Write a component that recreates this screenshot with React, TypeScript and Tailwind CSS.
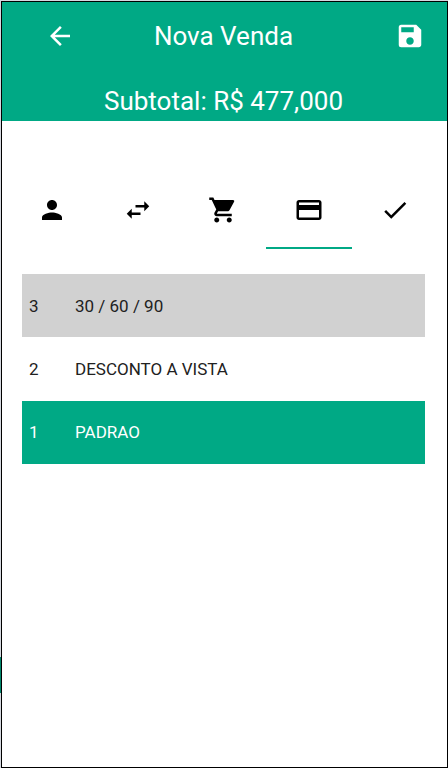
import { useState } from 'react';
import {
  MdArrowBack,
  MdCheck,
  MdCreditCard,
  MdPerson,
  MdSave,
  MdShoppingCart,
  MdSwapHoriz,
} from 'react-icons/md';

interface PaymentTerm {
  id: number;
  name: string;
}

const terms: PaymentTerm[] = [
  { id: 3, name: '30 / 60 / 90' },
  { id: 2, name: 'DESCONTO A VISTA' },
  { id: 1, name: 'PADRAO' },
];

const tabs = [
  { id: 'cliente', label: 'Cliente', Icon: MdPerson },
  { id: 'operacao', label: 'Operação', Icon: MdSwapHoriz },
  { id: 'produtos', label: 'Produtos', Icon: MdShoppingCart },
  { id: 'pagamento', label: 'Pagamento', Icon: MdCreditCard },
  { id: 'concluir', label: 'Concluir', Icon: MdCheck },
];

function rowColor(index: number, selected: boolean) {
  if (selected) return 'bg-[#00a985] text-white';
  return index % 2 === 0 ? 'bg-[#d1d1d1] text-[#212121]' : 'text-[#212121]';
}

export default function App() {
  const [activeTab, setActiveTab] = useState('pagamento');
  const [selectedId, setSelectedId] = useState(1);

  return (
    <div className="flex min-h-screen bg-[#d5d8df] pt-px font-[Roboto,sans-serif]">
      {/* Edge of the screen behind */}
      <div className="flex w-px flex-col justify-end pb-[75px]">
        <div className="h-9 bg-[#00856a]" />
      </div>

      <div className="flex-1 border border-black bg-white">
        {/* Header */}
        <header className="bg-[#00a985] pr-0.5 text-[26px] leading-8 text-white">
          <div className="grid grid-cols-[1fr_auto_1fr] items-center pt-[18px]">
            <button type="button" aria-label="Voltar" className="ml-[43px] justify-self-start">
              <MdArrowBack size={30} />
            </button>
            <h1>Nova Venda</h1>
            <button type="button" aria-label="Salvar" className="mr-5 justify-self-end">
              <MdSave size={30} />
            </button>
          </div>
          <p className="pt-[33px] pb-1 text-center">Subtotal: R$ 477,000</p>
        </header>

        {/* Tabs */}
        <div role="tablist" className="mt-[50px] flex pr-[9px] pl-[7px]">
          {tabs.map(({ id, label, Icon }) => (
            <button
              key={id}
              type="button"
              role="tab"
              aria-label={label}
              aria-selected={id === activeTab}
              onClick={() => setActiveTab(id)}
              className={`flex h-[78px] flex-1 items-center justify-center border-b-2 pt-0.5 text-black ${
                id === activeTab ? 'border-[#00a985]' : 'border-transparent'
              }`}
            >
              <Icon size={30} />
            </button>
          ))}
        </div>

        {/* Payment terms */}
        <div className="mt-[25px] pr-[22px] pl-5">
          <table className="h-[190px] w-full text-left text-[17px] leading-6">
            <tbody>
              {terms.map((term, index) => (
                <tr
                  key={term.id}
                  onClick={() => setSelectedId(term.id)}
                  className={`cursor-pointer ${rowColor(index, term.id === selectedId)}`}
                >
                  <td className="w-[53px] pl-[7px]">{term.id}</td>
                  <td>{term.name}</td>
                </tr>
              ))}
            </tbody>
          </table>
        </div>
      </div>
    </div>
  );
}
